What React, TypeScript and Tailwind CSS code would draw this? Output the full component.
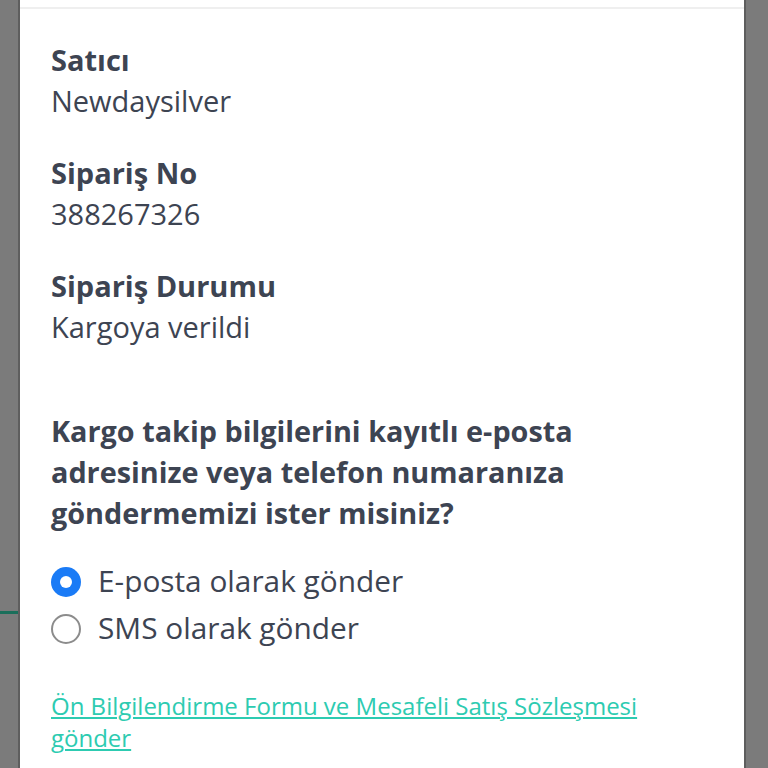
import React, { useState } from 'react';

const font = { fontFamily: '"Open Sans", "Noto Sans", sans-serif' };

function Radio({ checked, label, onClick }: { checked: boolean; label: string; onClick: () => void }) {
  return (
    <button onClick={onClick} className="flex items-center h-[47px] text-left">
      {checked ? (
        <span className="w-[30px] h-[30px] rounded-full bg-[#1a7bf6] flex items-center justify-center">
          <span className="w-[12px] h-[12px] rounded-full bg-white" />
        </span>
      ) : (
        <span className="w-[30px] h-[30px] rounded-full border-2 border-[#8c8c8c] bg-white" />
      )}
      <span className="ml-[17px] text-[29.8px] text-[#3d4452]">{label}</span>
    </button>
  );
}

export default function App() {
  const [method, setMethod] = useState<'email' | 'sms'>('email');

  const fields = [
    { label: 'Satıcı', value: 'Newdaysilver' },
    { label: 'Sipariş No', value: '388267326' },
    { label: 'Sipariş Durumu', value: 'Kargoya verildi' },
  ];

  return (
    <div className="w-[768px] h-[768px] overflow-hidden bg-[#7b7b7b] flex" style={font}>
      {/* dimmed page on the left */}
      <div className="w-[20px] flex-shrink-0 border-r-2 border-[#5e5e5e]">
        <div className="mt-[611px] h-[3px] bg-[#1b6f5b]" />
      </div>

      {/* sheet */}
      <div className="w-[724px] flex-shrink-0 bg-white">
        <div className="h-[9px] border-b-2 border-[#efefef]" />
        <div className="pl-[31px] pr-[20px] pt-[30px]">
          {fields.map((f) => (
            <div key={f.label} className="mb-[31px]">
              <div className="text-[29px] leading-[41px] font-bold text-[#3d4452]">{f.label}</div>
              <div className="text-[29px] leading-[41px] text-[#3d4452]">{f.value}</div>
            </div>
          ))}

          <p className="mt-[63px] text-[28.8px] leading-[41px] font-bold text-[#3d4452] w-[600px]">
            Kargo takip bilgilerini kayıtlı e-posta adresinize veya telefon numaranıza göndermemizi ister misiniz?
          </p>

          <div className="mt-[25px] flex flex-col">
            <Radio checked={method === 'email'} label="E-posta olarak gönder" onClick={() => setMethod('email')} />
            <Radio checked={method === 'sms'} label="SMS olarak gönder" onClick={() => setMethod('sms')} />
          </div>

          <a
            href="#"
            className="block mt-[38px] w-[650px] text-[24px] leading-[32px] font-medium text-[#2dcbb1] underline decoration-2 underline-offset-2"
          >
            Ön Bilgilendirme Formu ve Mesafeli Satış Sözleşmesi gönder
          </a>
        </div>
      </div>

      {/* dimmed page on the right */}
      <div className="flex-1 border-l-2 border-[#5e5e5e]" />
    </div>
  );
}
